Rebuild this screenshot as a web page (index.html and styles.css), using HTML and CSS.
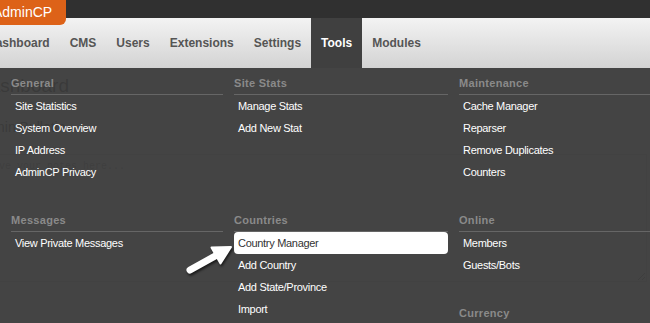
FILE: index.html
```html
<!DOCTYPE html>
<html lang="en">
<head>
    <meta charset="UTF-8">
    <meta name="viewport" content="width=device-width, initial-scale=1.0">
    <title>AdminCP - Tools</title>
    <link rel="stylesheet" href="styles.css">
</head>
<body>
    <div class="topbar">
        <a class="brand" href="#">AdminCP</a>
    </div>

    <nav class="navbar">
        <ul class="nav">
            <li><a href="#">Dashboard</a></li>
            <li><a href="#">CMS</a></li>
            <li><a href="#">Users</a></li>
            <li><a href="#">Extensions</a></li>
            <li><a href="#">Settings</a></li>
            <li class="active"><a href="#">Tools</a></li>
            <li><a href="#">Modules</a></li>
        </ul>
    </nav>

    <!-- Page content (under the open menu) -->
    <main class="content">
        <h1>Dashboard</h1>
        <h2>Admin Bulletin</h2>
        <textarea class="notes" placeholder="Leave your notes here..."></textarea>
    </main>

    <!-- Tools dropdown -->
    <div class="dropdown">
        <div class="section">
            <h3>General</h3>
            <ul>
                <li><a href="#">Site Statistics</a></li>
                <li><a href="#">System Overview</a></li>
                <li><a href="#">IP Address</a></li>
                <li><a href="#">AdminCP Privacy</a></li>
            </ul>
        </div>
        <div class="section">
            <h3>Site Stats</h3>
            <ul>
                <li><a href="#">Manage Stats</a></li>
                <li><a href="#">Add New Stat</a></li>
            </ul>
        </div>
        <div class="section">
            <h3>Maintenance</h3>
            <ul>
                <li><a href="#">Cache Manager</a></li>
                <li><a href="#">Reparser</a></li>
                <li><a href="#">Remove Duplicates</a></li>
                <li><a href="#">Counters</a></li>
            </ul>
        </div>
        <div class="section">
            <h3>Messages</h3>
            <ul>
                <li><a href="#">View Private Messages</a></li>
            </ul>
        </div>
        <div class="section">
            <h3>Countries</h3>
            <ul>
                <li class="current"><a href="#">Country Manager</a></li>
                <li><a href="#">Add Country</a></li>
                <li><a href="#">Add State/Province</a></li>
                <li><a href="#">Import</a></li>
            </ul>
        </div>
        <div class="stack">
            <div class="section">
                <h3>Online</h3>
                <ul>
                    <li><a href="#">Members</a></li>
                    <li><a href="#">Guests/Bots</a></li>
                </ul>
            </div>
            <div class="section">
                <h3>Currency</h3>
                <ul>
                    <li><a href="#">Currencies</a></li>
                </ul>
            </div>
        </div>
    </div>

    <!-- pointer arrow -->
    <svg class="pointer" width="56" height="36" viewBox="0 0 56 36">
        <line x1="10" y1="30" x2="37" y2="15" stroke="#fff" stroke-width="7" stroke-linecap="round"/>
        <polygon points="51,7 31.5,7.5 40.5,23.5" fill="#fff" stroke="#fff" stroke-width="2" stroke-linejoin="round"/>
    </svg>
</body>
</html>
```

FILE: styles.css
```css
body {
    margin: 0;
    font-family: "Liberation Sans", Arial, sans-serif;
    background: #fff;
    height: 323px;
    overflow: hidden;
    position: relative;
}
.topbar {
    background: #303030;
    height: 18px;
}
.brand {
    position: relative;
    z-index: 2;
    display: inline-block;
    margin-left: -21px;
    padding: 0 14px;
    height: 25px;
    line-height: 25px;
    background: #dd6218;
    color: #fff;
    font-size: 14px;
    text-decoration: none;
    border-radius: 0 0 6px 6px;
}
.navbar {
    height: 50px;
    background: linear-gradient(#f3f3f3, #d3d3d3);
}
.nav {
    list-style: none;
    margin: 0 0 0 -23px;
    padding: 0;
    display: flex;
}
.nav a {
    display: block;
    padding: 0 10px;
    line-height: 50px;
    font-size: 12px;
    font-weight: bold;
    color: #555;
    text-decoration: none;
}
.nav .active a {
    background: #404040;
    color: #fff;
}
.content {
    margin-left: -24px;
    padding-top: 7px;
}
.content h1 {
    margin: 0;
    font-size: 19px;
    font-weight: normal;
    line-height: 22px;
}
.content h2 {
    margin: 21px 0 0;
    font-size: 14px;
    font-weight: normal;
    line-height: 18px;
}
.notes {
    display: block;
    margin-top: 18px;
    width: 671px;
    height: 128px;
    box-sizing: border-box;
    border: 1px solid #ccc;
    padding: 6px 4px;
    font-family: "Liberation Mono", monospace;
    font-size: 10px;
}
.dropdown {
    position: absolute;
    top: 68px;
    left: 0;
    right: 0;
    bottom: 0;
    background: rgba(60, 60, 60, 0.96);
    padding: 4px 0 0 11px;
    display: grid;
    grid-template-columns: 212px 214px 214px;
    column-gap: 11px;
    row-gap: 26px;
    align-content: start;
}
.stack {
    display: flex;
    flex-direction: column;
    gap: 26px;
}
.section h3 {
    margin: 0;
    font-size: 11px;
    font-weight: bold;
    letter-spacing: 0.3px;
    color: #8a8a8a;
    line-height: 22px;
    border-bottom: 1px solid #666;
}
.section ul {
    list-style: none;
    margin: 0;
    padding: 0;
}
.section a {
    display: block;
    height: 22px;
    line-height: 22px;
    padding: 0 4px;
    font-size: 11px;
    letter-spacing: -0.3px;
    color: #fff;
    text-decoration: none;
}
.section .current a {
    background: #fff;
    color: #333;
    border-radius: 4px;
}
.pointer {
    position: absolute;
    left: 180px;
    top: 240px;
    z-index: 3;
    filter: drop-shadow(1px 2px 1px rgba(0, 0, 0, 0.6));
}
```
